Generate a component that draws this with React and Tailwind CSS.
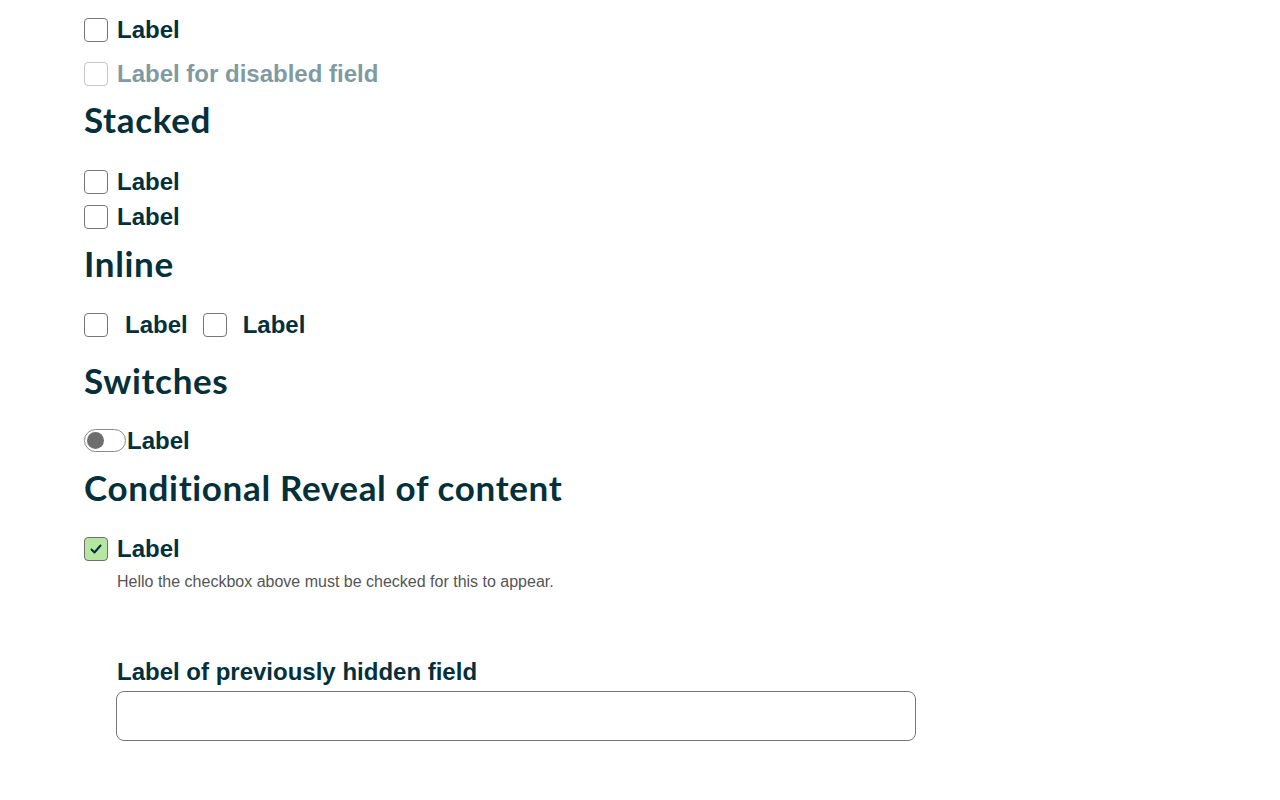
export default function App() {
  const label = "font-['Liberation_Sans',Arial,sans-serif] font-bold text-[24px] leading-[28px] text-[#04303b]";
  const heading = "font-['Lato',sans-serif] font-bold text-[35px] tracking-[0.65px] leading-[48px] h-[48px] text-[#04303b]";
  const box = "w-6 h-6 shrink-0 rounded-[4px] border-[1.5px] border-[#767676] bg-white";

  return (
    <div className="min-h-[800px] bg-white pl-[84px] pt-[8px]">
      <div className="flex h-[44px] items-center gap-[9px]">
        <span className={box} />
        <span className={label}>Label</span>
      </div>
      <div className="flex h-[44px] items-center gap-[9px]">
        <span className="h-6 w-6 shrink-0 rounded-[4px] border-[1.5px] border-[#c6c6c6] bg-white" />
        <span className={label + " !text-[#7f9aa1]"}>Label for disabled field</span>
      </div>

      <h2 className={heading + " -mt-px"}>Stacked</h2>
      <div className="mt-[21px] flex h-[35px] items-center gap-[9px]">
        <span className={box} />
        <span className={label}>Label</span>
      </div>
      <div className="flex h-[35px] items-center gap-[9px]">
        <span className={box} />
        <span className={label}>Label</span>
      </div>

      <h2 className={heading + " mt-[5px]"}>Inline</h2>
      <div className="mt-[20px] flex h-[35px] items-center">
        <span className={box} />
        <span className={label + " ml-[17px] mr-[15px]"}>Label</span>
        <span className={box} />
        <span className={label + " ml-[16px]"}>Label</span>
      </div>

      <h2 className={heading + " mt-[14px]"}>Switches</h2>
      <div className="mt-[19px] flex h-[35px] items-center">
        <span className="flex h-[23px] w-[42px] shrink-0 items-center rounded-full border-[1.5px] border-[#8a8a8a] bg-white pl-[2px]">
          <span className="h-[17px] w-[17px] rounded-full bg-[#6e6e6e]" />
        </span>
        <span className={label + " ml-px"}>Label</span>
      </div>

      <h2 className={heading + " mt-[5px]"}>Conditional Reveal of content</h2>
      <div className="mt-[20px] flex h-[35px] items-center gap-[9px]">
        <span className="flex h-6 w-6 shrink-0 items-center justify-center rounded-[4px] border-[1.5px] border-[#6f6f6f] bg-[#b5e7a2]">
          <svg width="14" height="14" viewBox="0 0 14 14" fill="none">
            <polyline points="2.5,7.5 5.5,10.5 11.5,3.5" stroke="#04303b" strokeWidth="2" strokeLinecap="round" strokeLinejoin="round" />
          </svg>
        </span>
        <span className={label}>Label</span>
      </div>
      <div className="ml-[33px]">
        <p className="mt-[6px] font-['Liberation_Sans',Arial,sans-serif] text-[16px] leading-[20px] text-[#555555]">
          Hello the checkbox above must be checked for this to appear.
        </p>
        <label className={label + " mt-[66px] block"}>Label of previously hidden field</label>
        <input
          type="text"
          className="-ml-px mt-[5px] block h-[50px] w-[800px] rounded-[8px] border border-[#777777] bg-white px-3 outline-none"
        />
      </div>
    </div>
  );
}
